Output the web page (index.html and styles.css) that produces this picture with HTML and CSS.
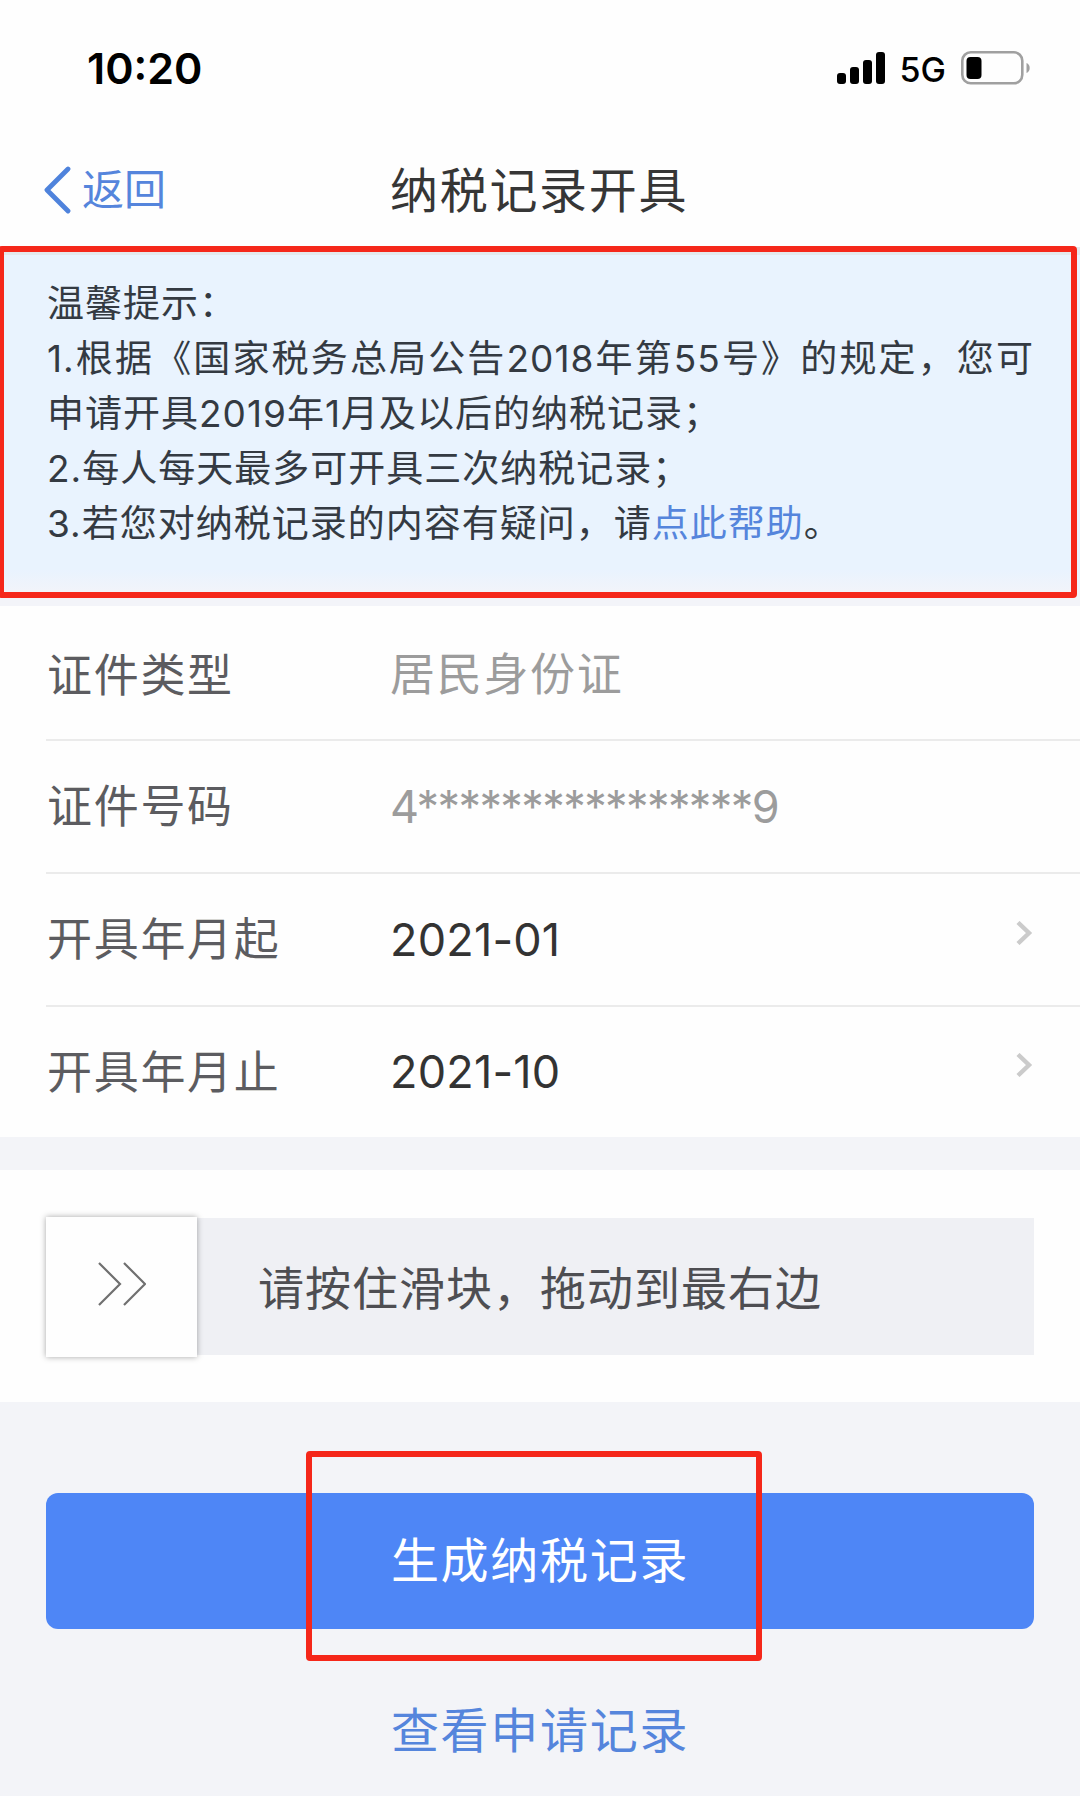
FILE: index.html
```html
<!DOCTYPE html>
<html lang="zh-CN">

<head>
    <meta charset="UTF-8">
    <meta name="viewport" content="width=device-width, initial-scale=1.0">
    <title>纳税记录开具</title>
    <link rel="stylesheet" href="styles.css">
</head>

<body>
    <div class="page">
        <div class="status-bar">
            <span class="time">10:20</span>
            <div class="status-right">
                <svg class="signal" width="48" height="32" viewBox="0 0 48 32">
                    <rect x="0" y="21" width="9" height="11" rx="3"/>
                    <rect x="13" y="15" width="9" height="17" rx="3"/>
                    <rect x="26" y="8" width="9" height="24" rx="3"/>
                    <rect x="39" y="0" width="9" height="32" rx="3"/>
                </svg>
                <span class="network">5G</span>
                <svg class="battery" width="70" height="34" viewBox="0 0 70 34">
                    <rect x="1.3" y="1.3" width="60" height="31" rx="8.5" fill="none" stroke="#a0a0a0" stroke-width="2.6"/>
                    <rect x="5.5" y="6" width="15" height="22" rx="4"/>
                    <path d="M65.5 12 a5.5 5.5 0 0 1 0 10 z" fill="#a0a0a0"/>
                </svg>
            </div>
        </div>

        <header class="nav">
            <a href="#" class="back">
                <svg width="27" height="48" viewBox="0 0 27 48">
                    <path d="M24 3 L3 24 L24 45" fill="none" stroke="#4f83dc" stroke-width="4.8" stroke-linecap="round" stroke-linejoin="round"/>
                </svg>
                <span>返回</span>
            </a>
            <h1>纳税记录开具</h1>
        </header>

        <section class="tips">
            <p>温馨提示：</p>
            <p class="first-tip">1.根据《国家税务总局公告2018年第55号》的规定，您可申请开具2019年1月及以后的纳税记录；</p>
            <p>2.每人每天最多可开具三次纳税记录；</p>
            <p>3.若您对纳税记录的内容有疑问，请<a href="#">点此帮助</a>。</p>
            <div class="mark mark-tips"></div>
        </section>

        <section class="form">
            <div class="row">
                <span class="label">证件类型</span>
                <span class="value muted">居民身份证</span>
            </div>
            <div class="row">
                <span class="label">证件号码</span>
                <span class="value muted id-number">4****************9</span>
            </div>
            <div class="row">
                <span class="label">开具年月起</span>
                <span class="value">2021-01</span>
                <svg class="arrow" width="18" height="24" viewBox="0 0 18 24">
                    <path d="M2 1.5 L13 12 L2 22.5" fill="none" stroke="#cbcbcb" stroke-width="4.4"/>
                </svg>
            </div>
            <div class="row">
                <span class="label">开具年月止</span>
                <span class="value">2021-10</span>
                <svg class="arrow" width="18" height="24" viewBox="0 0 18 24">
                    <path d="M2 1.5 L13 12 L2 22.5" fill="none" stroke="#cbcbcb" stroke-width="4.4"/>
                </svg>
            </div>
        </section>

        <section class="verify">
            <div class="slider">
                <div class="handle">
                    <svg width="48" height="44" viewBox="0 0 48 44">
                        <path d="M1 1 L22 22 L1 43 M26 1 L47 22 L26 43" fill="none" stroke="#707070" stroke-width="2.2"/>
                    </svg>
                </div>
                <span class="slider-text">请按住滑块，拖动到最右边</span>
            </div>
        </section>

        <section class="actions">
            <button type="button" class="btn-create">
                <span>生成纳税记录</span>
                <span class="mark mark-btn"></span>
            </button>
            <a href="#" class="history">查看申请记录</a>
        </section>
    </div>
</body>

</html>
```
FILE: styles.css
```css
* {
    margin: 0;
    padding: 0;
    box-sizing: border-box;
    font-family: "Inter", "Noto Sans CJK SC", sans-serif;
}

body {
    background: #f3f4f8;
}

a {
    color: #5585dc;
    text-decoration: none;
}

.page {
    width: 1080px;
    height: 1796px;
    overflow: hidden;
    position: relative;
}

.status-bar {
    height: 136px;
    padding: 0 49px 0 87px;
    background: #fefefe;
    display: flex;
    justify-content: space-between;
    align-items: center;
}

.time {
    font-size: 43px;
    font-weight: 600;
    line-height: 1;
    color: #000;
}

.status-right {
    display: flex;
    align-items: center;
}

.network {
    margin: 3px 15px 0 15px;
    font-size: 34px;
    font-weight: 500;
    line-height: 1;
    color: #000;
}

.nav {
    height: 111px;
    padding: 0 44px;
    background: #fefefe;
    display: grid;
    grid-template-columns: 346px 1fr;
    align-items: start;
}

.back {
    padding-top: 30px;
    display: flex;
    align-items: center;
    gap: 11px;
    font-size: 42px;
    line-height: 48px;
}

.nav h1 {
    padding-top: 23px;
    font-size: 48px;
    font-weight: 400;
    line-height: 64px;
    letter-spacing: 1.7px;
    color: #363636;
}

.tips {
    position: relative;
    height: 359px;
    padding: 21px 46px 0 47px;
    background: linear-gradient(#e9f3fe 0, #e9f3fe 315px, #f3f4f9 340px);
    border-top: 8px solid #e4e8ec;
    font-size: 37px;
    line-height: 55px;
    letter-spacing: 1px;
    color: #343a42;
}

.first-tip {
    text-align: justify;
}

/* red frames drawn over the page */
.mark {
    position: absolute;
    border: 6px solid #f5271a;
    border-radius: 4px;
}

.mark-tips {
    left: -2px;
    top: -9px;
    width: 1079px;
    height: 352px;
}

.form {
    background: #fefefe;
}

.row {
    height: 133px;
    margin-left: 46px;
    padding-right: 46px;
    border-bottom: 2px solid #ebebeb;
    display: grid;
    grid-template-columns: 344px 1fr auto;
    align-items: center;
    font-size: 45px;
    line-height: 60px;
}

.row:first-child {
    height: 135px;
    padding-top: 5px;
}

.row:last-child {
    height: 130px;
    border-bottom: none;
}

.label {
    padding: 1px 0 0 1px;
    color: #5c5c60;
    letter-spacing: 1.7px;
}

.value {
    color: #333;
    letter-spacing: 0.2px;
}

.muted {
    color: #9c9c9c;
    letter-spacing: 1.7px;
}

.id-number {
    letter-spacing: -1.6px;
}

.arrow {
    margin-top: -14px;
}

.verify {
    margin-top: 33px;
    padding: 48px 46px 47px;
    background: #fefefe;
}

.slider {
    height: 137px;
    background: #eff0f4;
    display: flex;
    align-items: center;
}

.handle {
    width: 151px;
    height: 140px;
    padding-bottom: 6px;
    background: #fefefe;
    box-shadow: 0 0 6px rgba(0, 0, 0, 0.35);
    display: flex;
    justify-content: center;
    align-items: center;
}

.slider-text {
    margin-left: 61px;
    margin-top: -4px;
    font-size: 46px;
    letter-spacing: 1px;
    color: #4e4e52;
}

.actions {
    padding: 91px 46px 0;
    display: flex;
    flex-direction: column;
    align-items: center;
}

.btn-create {
    position: relative;
    width: 100%;
    height: 136px;
    padding-bottom: 9px;
    border: none;
    border-radius: 12px;
    background: #4e86f6;
    color: #fff;
    font-size: 48px;
    letter-spacing: 1.7px;
}

.mark-btn {
    left: 260px;
    top: -42px;
    width: 456px;
    height: 210px;
}

.history {
    margin-top: 70px;
    font-size: 48px;
    line-height: 64px;
    letter-spacing: 1.7px;
}
```
